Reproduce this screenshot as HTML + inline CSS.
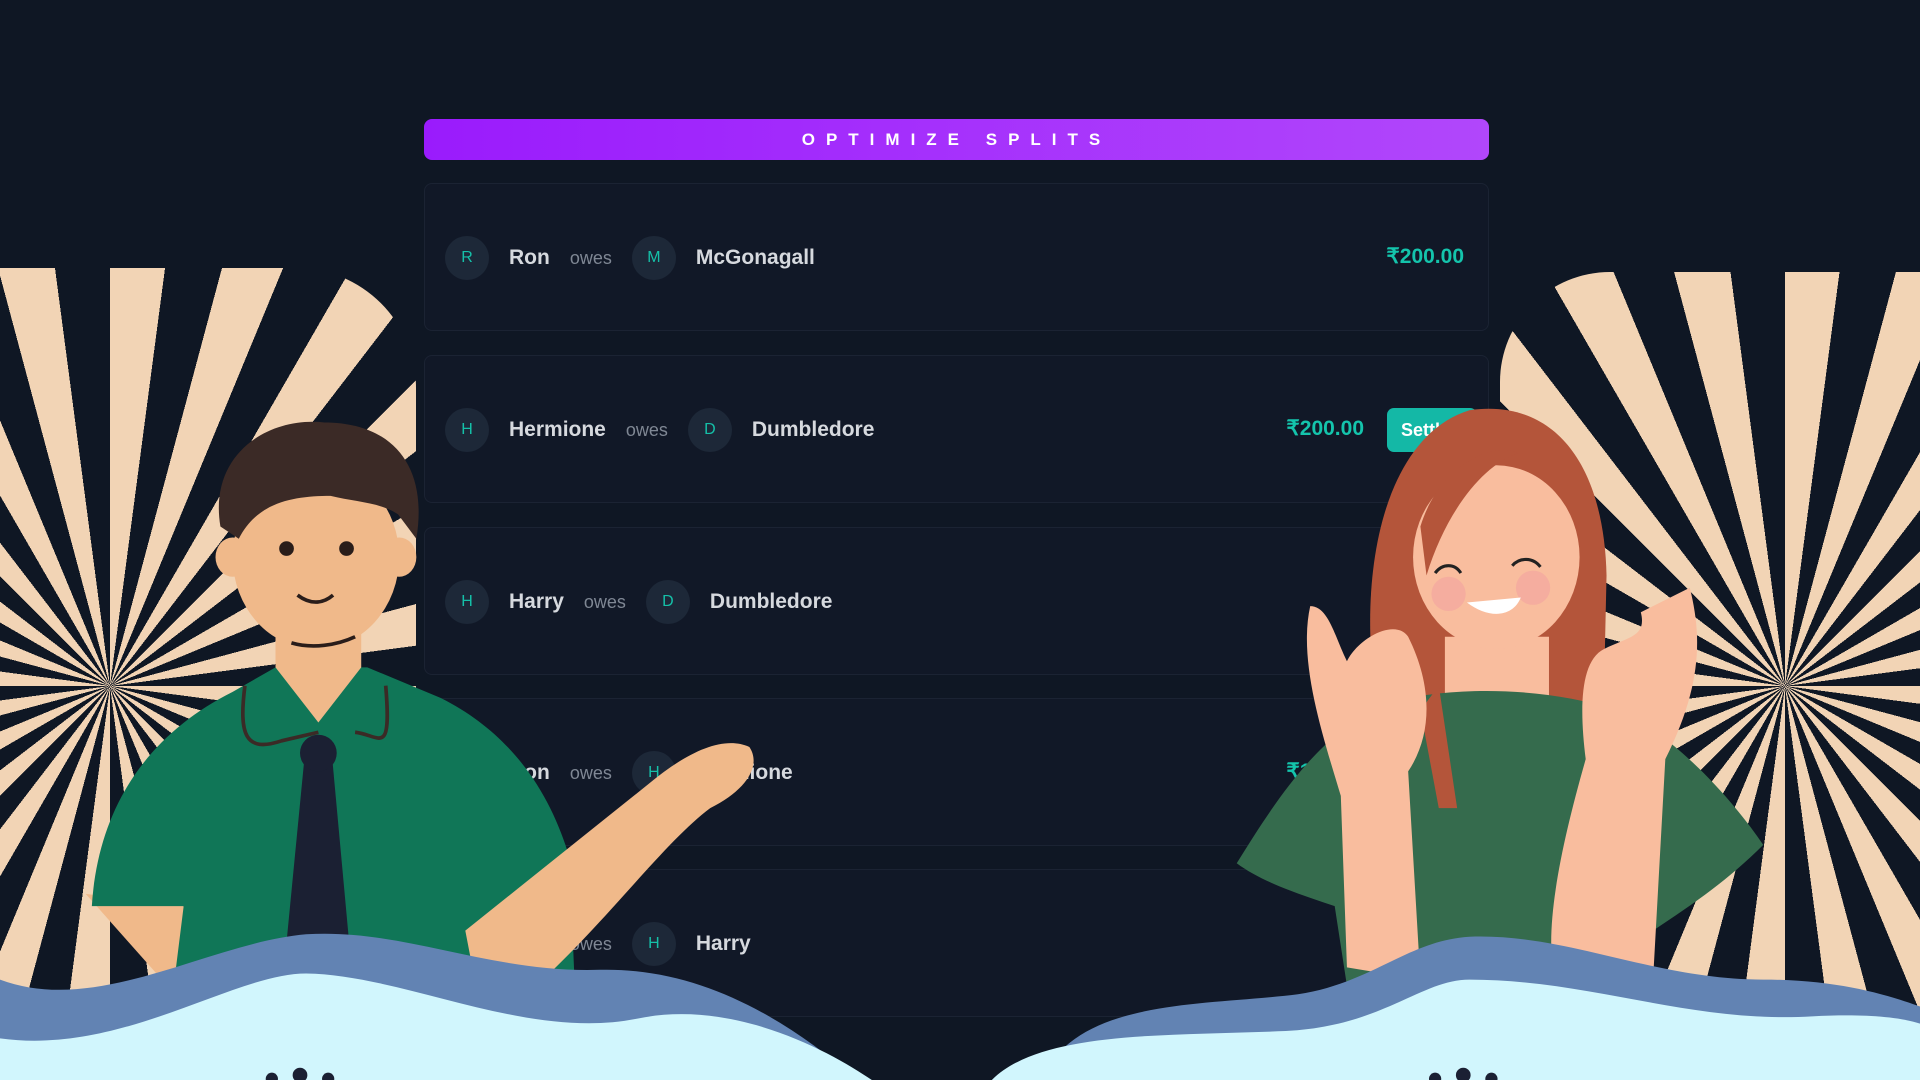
<!DOCTYPE html>
<html><head><meta charset="utf-8"><style>
*{margin:0;padding:0;box-sizing:border-box}
html,body{width:1920px;height:1080px;overflow:hidden}
body{background:#0f1724;font-family:"Liberation Sans",sans-serif;position:relative}
.sp{position:absolute;overflow:hidden}
.sp div{position:absolute;width:1400px;height:1400px;border-radius:50%;background:repeating-conic-gradient(#f2d4b5 0 7.5deg,#0f1724 7.5deg 15deg)}
.btn{position:absolute;left:424px;top:119px;width:1065px;height:41px;border-radius:8px;background:linear-gradient(90deg,#9a1bfc,#b147fb);color:#fff;font-weight:bold;font-size:17px;letter-spacing:11px;text-align:center;line-height:41px}
.card{position:absolute;left:424px;width:1065px;height:148px;background:#111827;border:1px solid #1b2333;border-radius:8px}
.row{position:absolute;left:20px;top:52px;height:44px;display:flex;align-items:center}
.av{width:44px;height:44px;border-radius:50%;background:#1d2838;color:#15c0a8;font-size:16px;display:flex;align-items:center;justify-content:center}
.nm{color:#d6d9de;font-weight:bold;font-size:21px;margin:0 20px 0 20px}
.ow{color:#7f8794;font-size:18px;margin-right:20px}
.amt{position:absolute;right:24px;top:60px;color:#14c4ac;font-weight:bold;font-size:21px}
.set{position:absolute;left:962px;top:52px;width:90px;height:44px;border-radius:7px;background:#14b8a6;color:#fff;font-weight:bold;font-size:18px;line-height:44px;padding-left:14px}
svg{position:absolute;left:0;top:0}
</style></head><body>
<div class="sp" style="left:0;top:268px;width:416px;height:740px;border-radius:0 120px 0 0"><div style="left:-590px;top:-282px"></div></div>
<div class="sp" style="left:1500px;top:272px;width:420px;height:735px;border-radius:110px 0 0 0"><div style="left:-415px;top:-286px"></div></div>

<div class="btn">OPTIMIZE SPLITS</div>
<div class="card" style="top:183px"><div class="row"><div class="av">R</div><span class="nm">Ron</span><span class="ow">owes</span><div class="av">M</div><span class="nm">McGonagall</span></div><div class="amt">₹200.00</div></div>
<div class="card" style="top:355px"><div class="row"><div class="av">H</div><span class="nm">Hermione</span><span class="ow">owes</span><div class="av">D</div><span class="nm">Dumbledore</span></div><div class="amt" style="right:124px">₹200.00</div><div class="set">Settle</div></div>
<div class="card" style="top:527px"><div class="row"><div class="av">H</div><span class="nm">Harry</span><span class="ow">owes</span><div class="av">D</div><span class="nm">Dumbledore</span></div></div>
<div class="card" style="top:698px"><div class="row"><div class="av">R</div><span class="nm">Ron</span><span class="ow">owes</span><div class="av">H</div><span class="nm">Hermione</span></div><div class="amt" style="right:124px">₹160.00</div></div>
<div class="card" style="top:869px"><div class="row"><div class="av">R</div><span class="nm">Ron</span><span class="ow">owes</span><div class="av">H</div><span class="nm">Harry</span></div></div>

<svg width="1920" height="1080" viewBox="0 0 1568 882">
<path d="M70,730 L150,820 L165,820 L150,740Z" fill="#f0b98a"/>
<path d="M75,740 C80,660 120,600 190,565 L225,545 L300,545 L360,570 C420,600 450,650 465,700 L470,820 L140,820 L150,740Z" fill="#107657"/>
<path d="M380,760 C430,720 480,680 530,640 C560,615 590,600 612,610 C622,625 610,645 580,660 C540,690 490,760 430,812 L390,812Z" fill="#f0b98a"/>
<path d="M225,510 L295,510 L295,545 L260,590 L225,545Z" fill="#f0b98a"/>
<path d="M250,605 L270,605 L287,790 L232,790Z" fill="#1b2033"/>
<circle cx="260" cy="615" r="15" fill="#1b2033"/>
<path d="M200,560 C195,600 200,615 230,605 L260,598 M290,598 C310,600 320,620 315,560" stroke="#3b2a26" stroke-width="3" fill="none"/>
<ellipse cx="258" cy="455" rx="68" ry="75" fill="#f0b98a"/>
<ellipse cx="190" cy="455" rx="14" ry="16" fill="#f0b98a"/><ellipse cx="326" cy="455" rx="14" ry="16" fill="#f0b98a"/>
<path d="M180,430 C170,370 220,340 265,345 C320,345 350,380 340,440 L325,420 C310,410 290,410 270,405 C240,405 210,410 195,440Z" fill="#3b2a26"/>
<circle cx="234" cy="448" r="6" fill="#2a1d1a"/><circle cx="283" cy="448" r="6" fill="#2a1d1a"/>
<path d="M243,486 C255,495 265,492 272,486 M238,525 C255,530 275,527 290,520" stroke="#2a1d1a" stroke-width="3" fill="none"/>
<path d="M1130,600 C1105,500 1120,360 1200,335 C1270,325 1310,380 1312,470 L1310,560 L1260,600 L1185,660 L1160,640Z" fill="#b4553a"/>
<path d="M1180,520 L1265,520 L1265,570 L1180,570Z" fill="#f9bd9e"/>
<path d="M1010,705 C1050,640 1080,600 1130,575 C1180,560 1260,560 1320,580 C1370,600 1420,660 1440,690 C1410,720 1380,740 1350,760 L1350,805 L1100,805 L1090,740 C1060,730 1030,720 1010,705Z" fill="#356b4d"/>
<path d="M1175,560 L1190,660 L1175,660 L1160,580Z" fill="#b4553a"/>
<ellipse cx="1222" cy="455" rx="68" ry="75" fill="#f9bd9e"/>
<path d="M1160,430 C1175,380 1220,360 1240,370 C1210,380 1180,420 1165,470Z" fill="#b4553a"/>
<circle cx="1183" cy="485" r="14" fill="#f4a7a0" opacity=".7"/><circle cx="1252" cy="480" r="14" fill="#f4a7a0" opacity=".7"/>
<path d="M1198,492 C1215,505 1235,505 1242,488Z" fill="#fff"/>
<path d="M1172,468 C1178,460 1188,460 1193,468 M1235,462 C1241,455 1252,455 1258,463" stroke="#222" stroke-width="2.5" fill="none"/>
<path d="M1100,790 L1095,650 C1080,600 1060,540 1070,495 C1085,495 1090,520 1100,540 C1110,520 1140,505 1150,520 C1170,560 1170,600 1150,630 L1160,800Z" fill="#f9bd9e"/>
<path d="M1270,800 C1260,760 1275,690 1295,620 C1290,580 1290,540 1310,530 C1330,520 1345,520 1340,500 L1380,480 C1390,520 1390,560 1360,620 L1350,800Z" fill="#f9bd9e"/>
<path d="M0,800 C80,830 170,770 250,763 C330,758 400,795 490,792 C570,790 640,830 700,882 L0,882Z" fill="#6283b3"/>
<path d="M0,848 C100,862 190,795 250,795 C330,796 430,850 520,832 C600,815 680,860 712,882 L0,882Z" fill="#d1f6fd"/>
<path d="M850,882 C880,815 980,822 1060,812 C1120,803 1150,768 1200,765 C1280,762 1350,800 1440,800 C1500,800 1540,812 1568,822 L1568,882Z" fill="#6283b3"/>
<path d="M810,882 C850,842 950,846 1050,842 C1130,838 1160,800 1200,800 C1300,800 1380,836 1480,830 C1520,828 1550,830 1568,836 L1568,882Z" fill="#d1f6fd"/>
<circle cx="222" cy="881" r="5" fill="#1b2033"/><circle cx="245" cy="878" r="6" fill="#1b2033"/><circle cx="268" cy="881" r="5" fill="#1b2033"/>
<circle cx="1172" cy="881" r="5" fill="#1b2033"/><circle cx="1195" cy="878" r="6" fill="#1b2033"/><circle cx="1218" cy="881" r="5" fill="#1b2033"/>
</svg>
</body></html>
